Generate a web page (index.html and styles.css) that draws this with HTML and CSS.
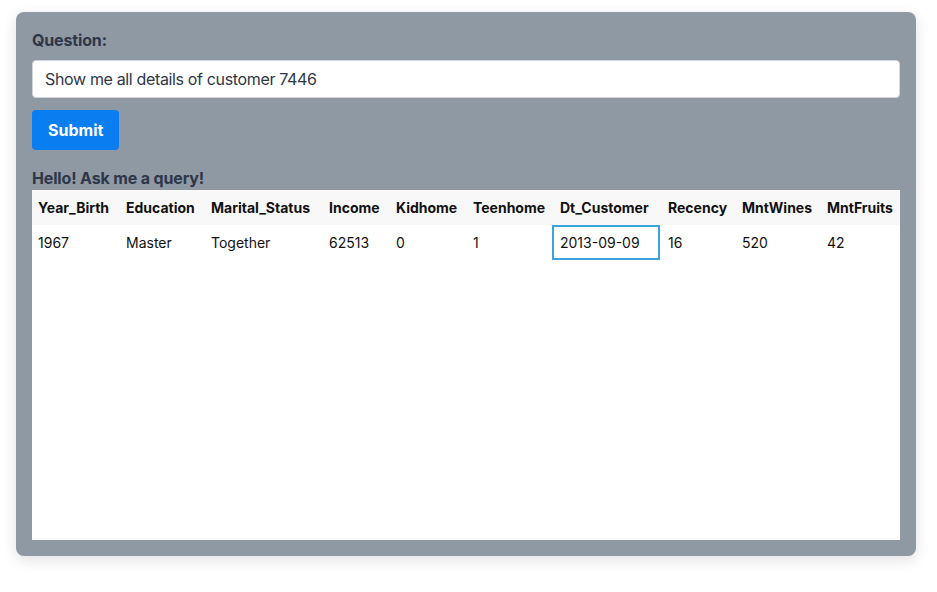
FILE: index.html
```html
<!DOCTYPE html>
<html lang="en">
<head>
<meta charset="utf-8">
<title>Query</title>
<link rel="stylesheet" href="styles.css">
</head>
<body>
<div class="card">
  <label class="label" for="q">Question:</label>
  <input id="q" class="input" type="text" value="Show me all details of customer 7446">
  <div><button class="btn" type="button">Submit</button></div>
  <div class="hello">Hello! Ask me a query!</div>
  <div class="result">
    <table class="grid">
      <colgroup>
        <col class="c1"><col class="c2"><col class="c3"><col class="c4"><col class="c5">
        <col class="c6"><col class="c7"><col class="c8"><col class="c9"><col class="c10">
      </colgroup>
      <thead>
        <tr>
          <th>Year_Birth</th><th>Education</th><th>Marital_Status</th><th>Income</th><th>Kidhome</th>
          <th>Teenhome</th><th>Dt_Customer</th><th>Recency</th><th>MntWines</th><th>MntFruits</th>
        </tr>
      </thead>
      <tbody>
        <tr>
          <td>1967</td><td>Master</td><td>Together</td><td>62513</td><td>0</td>
          <td>1</td><td class="focus">2013-09-09</td><td>16</td><td>520</td><td>42</td>
        </tr>
      </tbody>
    </table>
  </div>
</div>
</body>
</html>
```
FILE: styles.css
```css
html, body {
  margin: 0;
  padding: 0;
  background: #ffffff;
}
body {
  padding: 12px 21px 36px 16px;
  font-family: Inter, "Helvetica Neue", Arial, sans-serif;
  color: #2d3748;
}
.card {
  width: 868px;
  height: 512px;
  background: #8f99a4;
  border-radius: 8px;
  padding: 16px;
  box-shadow: 0 4px 14px rgba(0, 0, 0, 0.12);
  display: flex;
  flex-direction: column;
}
.label {
  display: block;
  font-size: 16px;
  font-weight: 700;
  line-height: 24px;
  letter-spacing: -0.15px;
  color: #2d3748;
  margin-bottom: 8px;
}
.input {
  box-sizing: border-box;
  width: 868px;
  height: 38px;
  border: 1px solid #d1d5db;
  border-radius: 4px;
  padding: 0 12px;
  font-family: inherit;
  font-size: 16px;
  letter-spacing: -0.35px;
  color: #2d3748;
  background: #ffffff;
  outline: none;
}
.btn {
  margin-top: 12px;
  height: 40px;
  padding: 0 16px;
  border: none;
  border-radius: 4px;
  background: #087ef0;
  color: #ffffff;
  font-family: inherit;
  font-size: 16px;
  font-weight: 700;
}
.hello {
  margin-top: 16px;
  font-size: 16px;
  font-weight: 700;
  line-height: 24px;
  letter-spacing: -0.15px;
  color: #2d3748;
}
.result {
  flex: 1;
  background: #ffffff;
}
.grid {
  border-collapse: collapse;
  table-layout: fixed;
  width: 868px;
  font-size: 14px;
  color: #111111;
}
.c1 { width: 86px; }
.c2 { width: 85px; }
.c3 { width: 118px; }
.c4 { width: 67px; }
.c5 { width: 77px; }
.c6 { width: 87px; }
.c7 { width: 108px; }
.c8 { width: 74px; }
.c9 { width: 85px; }
.c10 { width: 81px; }
.grid th, .grid td {
  height: 35px;
  padding: 0 0 0 8px;
  text-align: left;
  white-space: nowrap;
  overflow: hidden;
}
.grid th:first-child, .grid td:first-child {
  padding-left: 6px;
}
.grid thead tr {
  background: #f8f8f8;
}
.grid th {
  font-weight: 700;
}
.grid td.focus {
  box-shadow: inset 0 0 0 2px #3da3dd;
}
```
